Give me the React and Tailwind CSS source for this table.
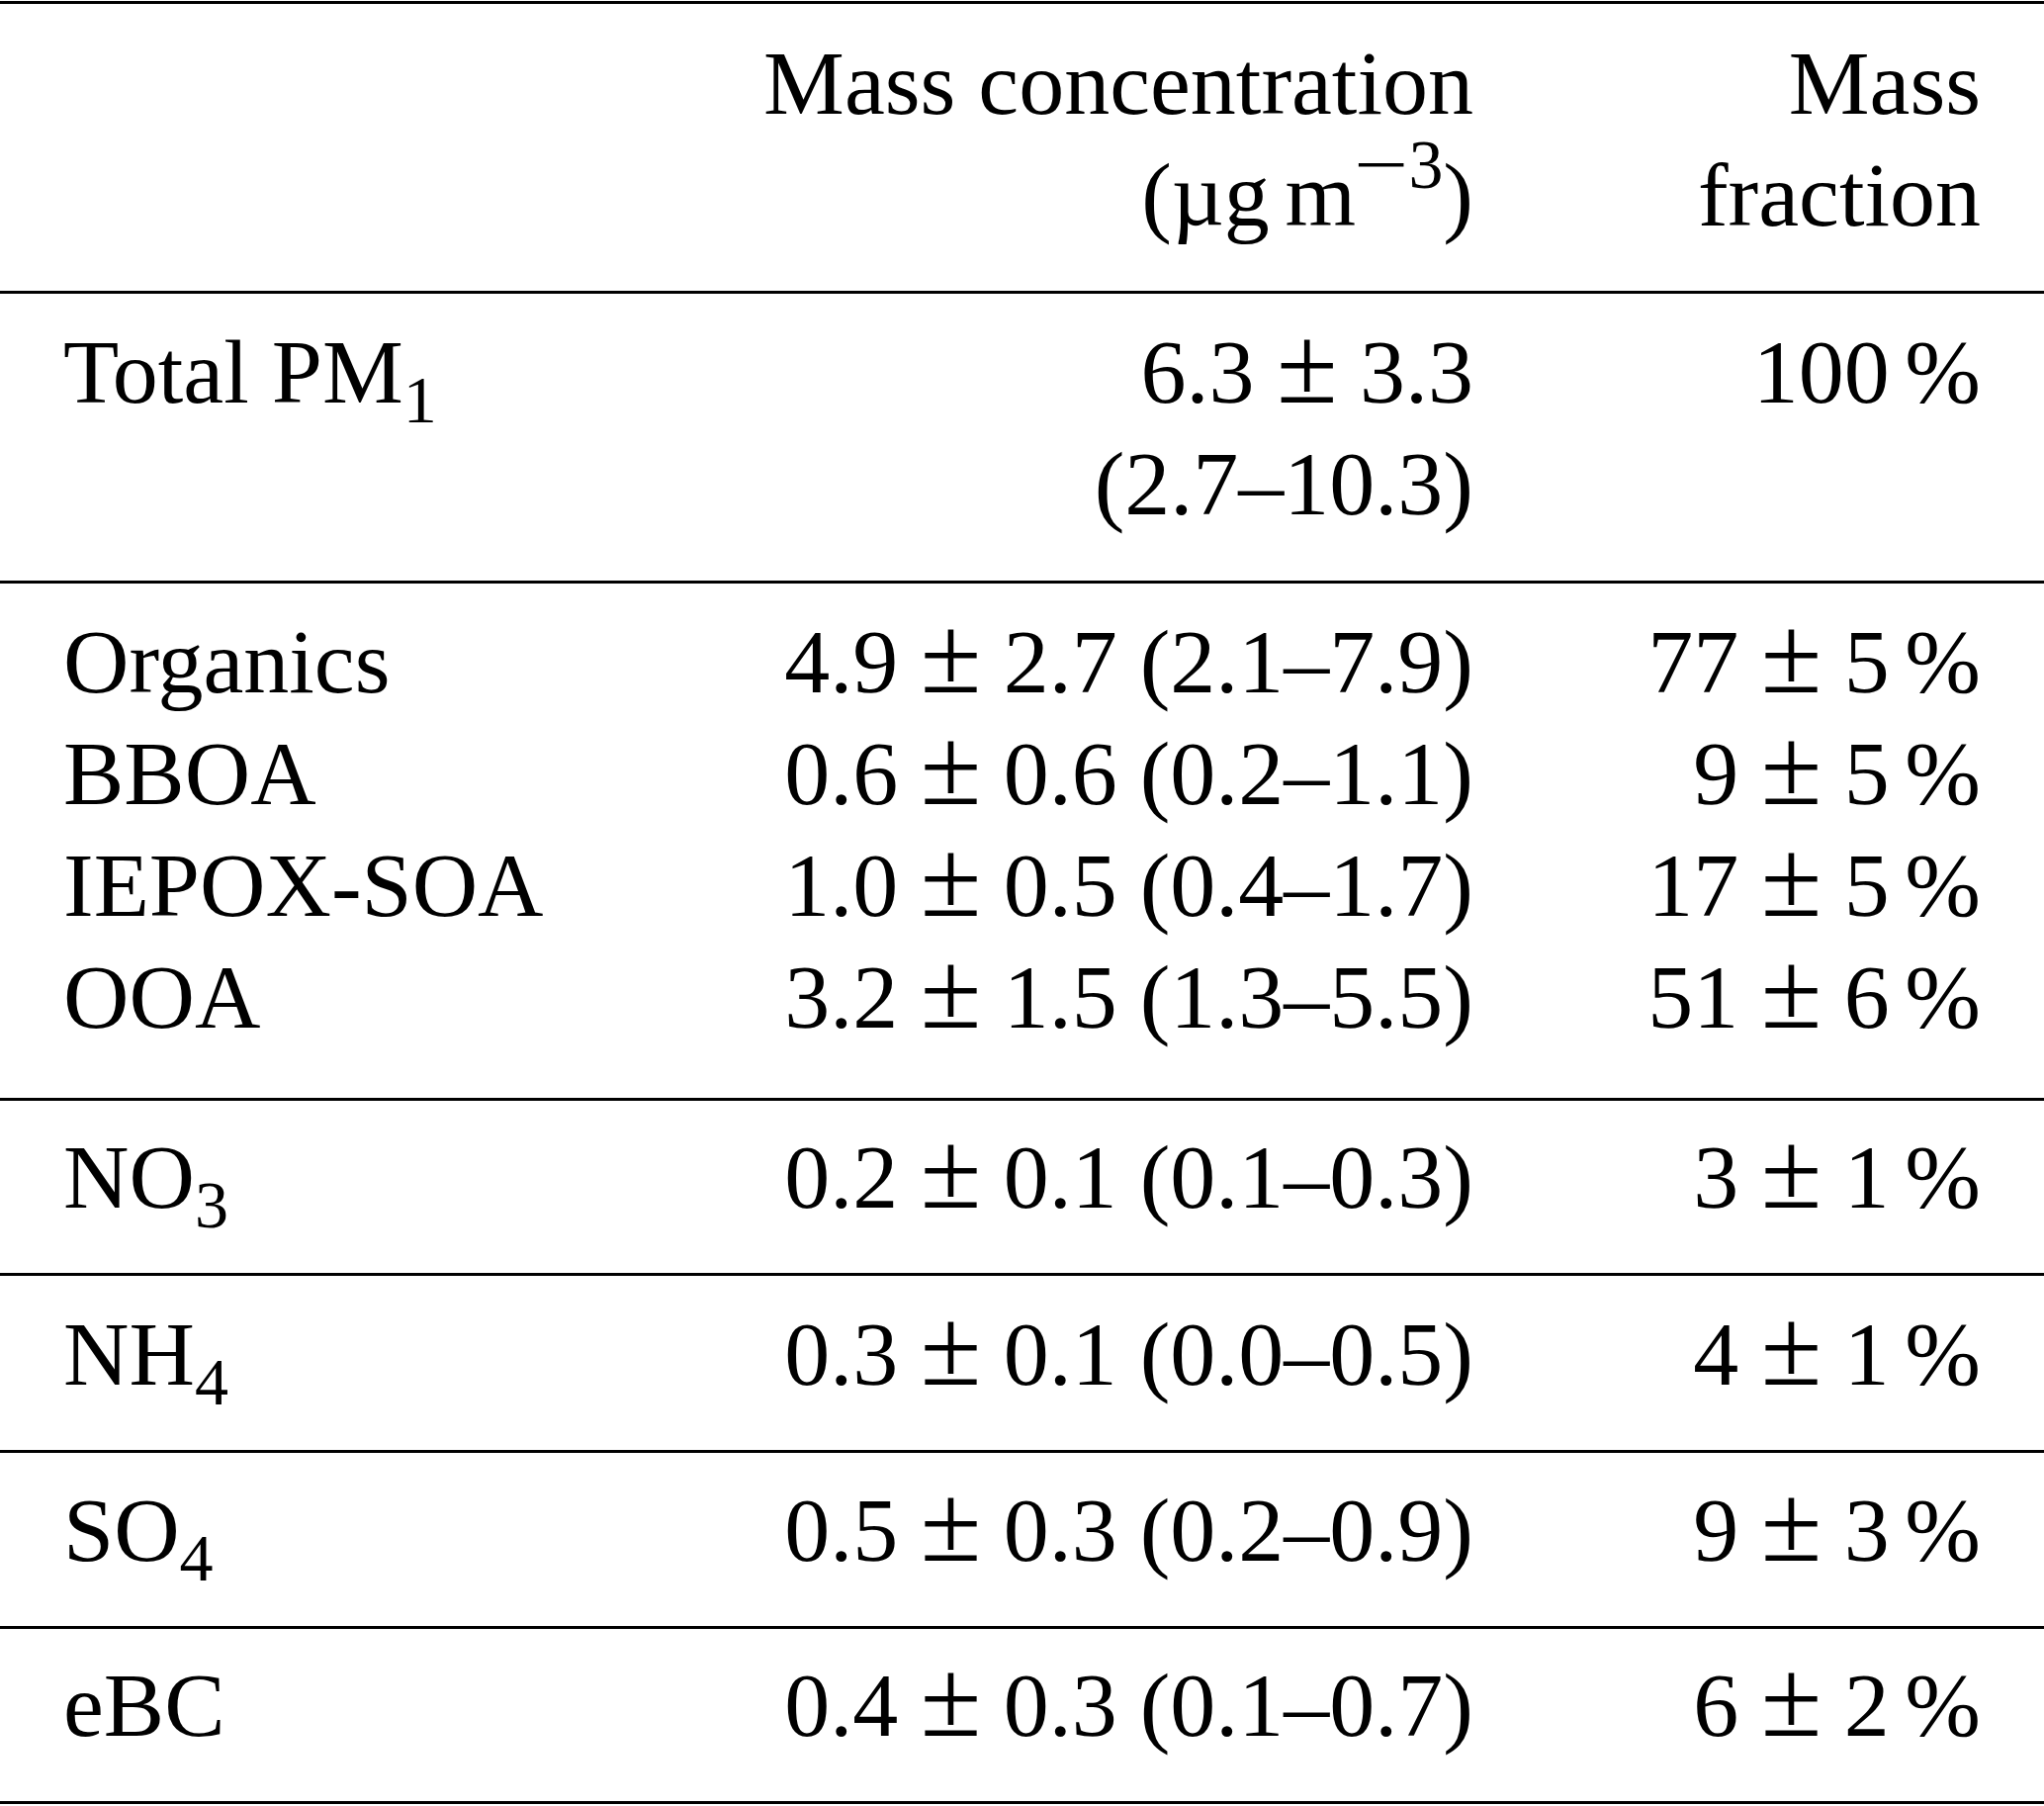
import React from "react";

const Pm = () => <span className="mx-[0.2em] text-[1.22em] leading-[0]">±</span>;
const Pct = () => <span className="ml-[0.17em]">%</span>;
const Sub = ({ children }) => (
  <span className="relative top-[20px] text-[0.74em] leading-[0]">{children}</span>
);

const Row = ({ a, b, c }) => (
  <div className="flex px-[64px]">
    <div className="flex-1">{a}</div>
    <div className="w-[800px] text-right">{b}</div>
    <div className="w-[513px] text-right">{c}</div>
  </div>
);

const v = (m, s, lo, hi) => (
  <>
    {m}
    <Pm />
    {s} ({lo}–{hi})
  </>
);

const f = (m, s) => (
  <>
    {m}
    <Pm />
    {s}
    <Pct />
  </>
);

const App = () => {
  return (
    <div
      className="w-[2067px] h-[1826px] bg-white text-black text-[92px] leading-[113px] pt-[1px]"
      style={{ fontFamily: '"Liberation Serif", "Times New Roman", serif' }}
    >
      <div className="border-t-[3px] border-black pt-[24px] pb-[40px]">
        <Row a="" b="Mass concentration" c="Mass" />
        <Row
          a=""
          b={
            <>
              (µg<span className="ml-[0.17em]">m</span>
              <span className="relative -top-[38px] text-[0.76em] leading-[0] ml-[0.08em]">
                <span className="inline-block scale-x-[1.4] mr-[0.12em]">−</span>3
              </span>
              )
            </>
          }
          c="fraction"
        />
      </div>
      <div className="border-t-[3px] border-black pt-[23px] pb-[41px]">
        <Row
          a={<>Total PM<Sub>1</Sub></>}
          b={<>6.3<Pm />3.3</>}
          c={<>100<Pct /></>}
        />
        <Row a="" b="(2.7–10.3)" c="" />
      </div>
      <div className="border-t-[3px] border-black pt-[23px] pb-[45px]">
        <Row a="Organics" b={v("4.9", "2.7", "2.1", "7.9")} c={f("77", "5")} />
        <Row a="BBOA" b={v("0.6", "0.6", "0.2", "1.1")} c={f("9", "5")} />
        <Row a="IEPOX-SOA" b={v("1.0", "0.5", "0.4", "1.7")} c={f("17", "5")} />
        <Row a="OOA" b={v("3.2", "1.5", "1.3", "5.5")} c={f("51", "6")} />
      </div>
      <div className="border-t-[3px] border-black pt-[21px] pb-[40px]">
        <Row a={<>NO<Sub>3</Sub></>} b={v("0.2", "0.1", "0.1", "0.3")} c={f("3", "1")} />
      </div>
      <div className="border-t-[3px] border-black pt-[23px] pb-[40px]">
        <Row a={<>NH<Sub>4</Sub></>} b={v("0.3", "0.1", "0.0", "0.5")} c={f("4", "1")} />
      </div>
      <div className="border-t-[3px] border-black pt-[22px] pb-[40px]">
        <Row a={<>SO<Sub>4</Sub></>} b={v("0.5", "0.3", "0.2", "0.9")} c={f("9", "3")} />
      </div>
      <div className="border-y-[3px] border-black pt-[21px] pb-[40px]">
        <Row a="eBC" b={v("0.4", "0.3", "0.1", "0.7")} c={f("6", "2")} />
      </div>
    </div>
  );
};

export default App;
